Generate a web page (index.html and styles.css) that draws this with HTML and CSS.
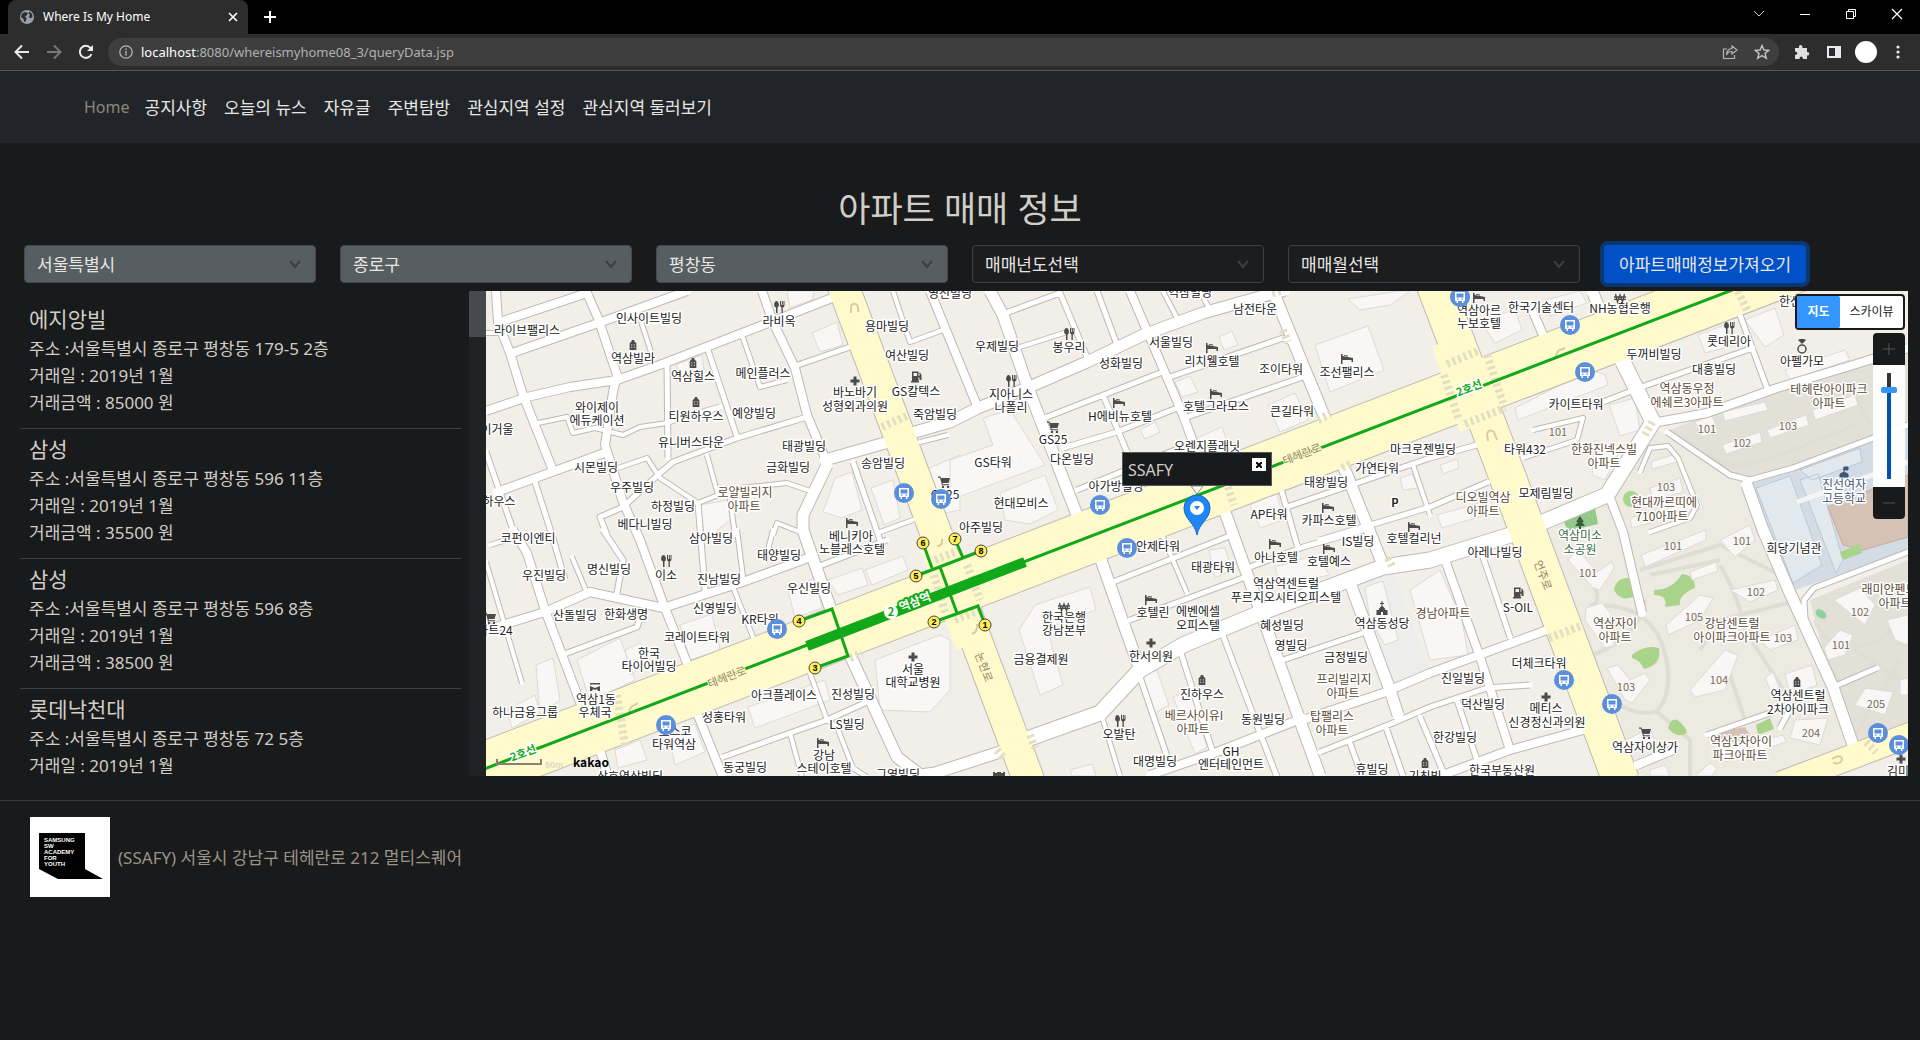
FILE: index.html
```html
<!DOCTYPE html>
<html lang="ko">
<head>
<meta charset="utf-8">
<meta name="viewport" content="width=device-width, initial-scale=1">
<title>Where Is My Home</title>
<link rel="stylesheet" href="styles.css">
</head>
<body>
<div class="browser">
  <div class="tabstrip">
    <div class="tab">
      <svg class="favicon" width="14" height="14" viewBox="0 0 14 14" aria-hidden="true"><circle cx="7" cy="7" r="7" fill="#9aa0a6"/><path d="M2 3.500L5 2L8 3L7 5L5 6.500L6.500 8L6 11L4 12L3.500 9L1 7Z M9.500 1.500L12 4L12.500 7L10 8.500L9 6.500L10 5L8.500 3Z" fill="#2d2e30"/></svg>
      <span class="tab-title">Where Is My Home</span>
      <button class="icon-btn" aria-label="Close tab"><svg width="10" height="10" viewBox="0 0 10 10"><path d="M1 1L9 9M9 1L1 9" stroke="#fff" stroke-width="1.600"/></svg></button>
    </div>
    <button class="icon-btn new-tab" aria-label="New tab"><svg width="14" height="14" viewBox="0 0 14 14"><path d="M7 1V13M1 7H13" stroke="#fff" stroke-width="2"/></svg></button>
    <div class="window-buttons">
      <button class="icon-btn" aria-label="Search tabs"><svg width="12" height="12" viewBox="0 0 12 12"><path d="M1 3L6 8L11 3" fill="none" stroke="#ccc"/></svg></button>
      <button class="icon-btn" aria-label="Minimize"><svg width="12" height="12" viewBox="0 0 12 12"><path d="M1 6.500H11" stroke="#fff"/></svg></button>
      <button class="icon-btn" aria-label="Restore"><svg width="12" height="12" viewBox="0 0 12 12"><path d="M1.500 3.500H8.500V10.500H1.500ZM3.500 3V1.500H10.500V8.500H9" fill="none" stroke="#fff"/></svg></button>
      <button class="icon-btn" aria-label="Close"><svg width="12" height="12" viewBox="0 0 12 12"><path d="M1 1L11 11M11 1L1 11" stroke="#fff" stroke-width="1.200"/></svg></button>
    </div>
  </div>
  <div class="toolbar">
    <button class="icon-btn" aria-label="Back"><svg width="16" height="16" viewBox="0 0 16 16"><path d="M15 8H2M8 1.500L1.500 8L8 14.500" fill="none" stroke="#e8eaed" stroke-width="2"/></svg></button>
    <button class="icon-btn" aria-label="Forward"><svg width="16" height="16" viewBox="0 0 16 16"><path d="M1 8H14M8 1.500L14.500 8L8 14.500" fill="none" stroke="#777" stroke-width="2"/></svg></button>
    <button class="icon-btn" aria-label="Reload"><svg width="16" height="16" viewBox="0 0 16 16"><path d="M13.500 10A6 6 0 1 1 12.500 4L14 5.500" fill="none" stroke="#e8eaed" stroke-width="2"/><path d="M15 1V7H9Z" fill="#e8eaed"/></svg></button>
    <div class="address">
      <svg width="14" height="14" viewBox="0 0 14 14" aria-hidden="true"><circle cx="7" cy="7" r="6.200" fill="none" stroke="#b5b5b5" stroke-width="1.300"/><path d="M7 6V10.500M7 3.500V5" stroke="#b5b5b5" stroke-width="1.400"/></svg>
      <span class="url" role="textbox" aria-label="Address"><b>localhost</b>:8080/whereismyhome08_3/queryData.jsp</span>
      <button class="icon-btn" aria-label="Share"><svg width="16" height="16" viewBox="0 0 16 16"><path d="M5 5H1.500V14.500H12.500V11M10 2L15 6L10 10V7.500C7 7.500 5 9 4.500 11C4.500 7 7 4.500 10 4.500Z" fill="none" stroke="#b5b5b5" stroke-width="1.200"/></svg></button>
      <button class="icon-btn" aria-label="Bookmark"><svg width="16" height="16" viewBox="0 0 16 16"><path d="M8 1.500L9.900 6L14.800 6.300L11 9.500L12.300 14.300L8 11.600L3.700 14.300L5 9.500L1.200 6.300L6.100 6Z" fill="none" stroke="#c5c5c5" stroke-width="1.400"/></svg></button>
    </div>
    <button class="icon-btn" aria-label="Extensions"><svg width="16" height="16" viewBox="0 0 16 16"><path d="M1 4H5C4 0 9 0 8.500 4H13V8C16 7.500 16 12 13 11.500V15H9C9 11.500 5.500 11.500 5.500 15H1V11C4 11 4 7.500 1 7.500Z" fill="#e0e0e0"/></svg></button>
    <button class="icon-btn" aria-label="Side panel"><svg width="16" height="16" viewBox="0 0 16 16"><path d="M1 2H15V14H1ZM3 4V12H9V4Z" fill="#e8eaed" fill-rule="evenodd"/></svg></button>
    <button class="icon-btn avatar" aria-label="Profile"></button>
    <button class="icon-btn" aria-label="Menu"><svg width="16" height="16" viewBox="0 0 16 16"><circle cx="8" cy="3" r="1.600" fill="#e8eaed"/><circle cx="8" cy="8" r="1.600" fill="#e8eaed"/><circle cx="8" cy="13" r="1.600" fill="#e8eaed"/></svg></button>
  </div>
</div>

<nav class="site-nav">
  <a class="current" href="#">Home</a>
  <a href="#">공지사항</a>
  <a href="#">오늘의 뉴스</a>
  <a href="#">자유글</a>
  <a href="#">주변탐방</a>
  <a href="#">관심지역 설정</a>
  <a href="#">관심지역 둘러보기</a>
</nav>

<main>
  <h1>아파트 매매 정보</h1>
  <form class="filters">
    <label class="field chosen"><select aria-label="시도"><option>서울특별시</option></select><svg width="16" height="16" viewBox="0 0 16 16"><path d="M3 5L8 11L13 5"/></svg></label>
    <label class="field chosen"><select aria-label="구군"><option>종로구</option></select><svg width="16" height="16" viewBox="0 0 16 16"><path d="M3 5L8 11L13 5"/></svg></label>
    <label class="field chosen"><select aria-label="동"><option>평창동</option></select><svg width="16" height="16" viewBox="0 0 16 16"><path d="M3 5L8 11L13 5"/></svg></label>
    <label class="field"><select aria-label="매매년도"><option>매매년도선택</option></select><svg width="16" height="16" viewBox="0 0 16 16"><path d="M3 5L8 11L13 5"/></svg></label>
    <label class="field"><select aria-label="매매월"><option>매매월선택</option></select><svg width="16" height="16" viewBox="0 0 16 16"><path d="M3 5L8 11L13 5"/></svg></label>
    <button class="submit" type="button">아파트매매정보가져오기</button>
  </form>

  <section class="results">
    <div class="list-pane">
      <div class="deals">
        <article class="deal"><h2>에지앙빌</h2><p>주소 :서울특별시 종로구 평창동 179-5 2층</p><p>거래일 : 2019년 1월</p><p>거래금액 : 85000 원</p></article>
        <article class="deal"><h2>삼성</h2><p>주소 :서울특별시 종로구 평창동 596 11층</p><p>거래일 : 2019년 1월</p><p>거래금액 : 35500 원</p></article>
        <article class="deal"><h2>삼성</h2><p>주소 :서울특별시 종로구 평창동 596 8층</p><p>거래일 : 2019년 1월</p><p>거래금액 : 38500 원</p></article>
        <article class="deal"><h2>롯데낙천대</h2><p>주소 :서울특별시 종로구 평창동 72 5층</p><p>거래일 : 2019년 1월</p></article>
      </div>
      <div class="scrollbar"><div class="thumb"></div></div>
    </div>

    <div class="map">
      <svg class="map-canvas" viewBox="486 291 1422 485" preserveAspectRatio="xMinYMin slice" role="img" aria-label="지도">
        <defs>
          <path id="rd4" d="M486 333L500 333M638 312L652 355M538 423L567 417L573 433L595 428L623 435L640 427L667 423M742 335L760 387L787 380M813 492L787 483L740 488M618 468L647 458L660 478L698 503L718 495L707 455M730 498L735 535M773 535L777 523L800 532M880 532L913 520M893 291L910 342L943 330M920 442L948 435M490 545L522 535M486 562L522 683M572 557L587 593M737 530L743 577M733 587L753 637M773 530L765 562M810 673L827 720L837 727L853 768L867 777M790 733L802 777M1020 347L1067 332M1163 291L1177 318M1200 291L1210 310M1163 537L1187 593M1413 465L1430 515M1523 458L1577 440L1583 418L1533 430M1640 472L1650 448L1668 446L1678 458L1697 505L1690 518L1650 532M1103 720L1120 776"/>
          <path id="rd6" d="M668 422L720 407M667 363L668 458M707 347L737 437M795 366L850 347M807 417L737 438L673 462L660 473L623 507L600 517L607 535M486 452L513 530M535 482L552 535L565 580M698 503L705 590M853 462L880 540M603 530L623 560L617 593M567 653L637 627L643 610M817 567L887 540M723 757L790 733L827 720L867 702M1003 314L1060 293L1087 357M1097 291L1117 345M1170 377L1283 338L1296 345M1187 417L1303 377M1047 417L1160 373M1063 448L1117 432L1177 408M1103 395L1127 452M1077 490L1180 448M1280 485L1297 545M1287 507L1430 458L1477 445M1320 540L1377 523L1430 507L1488 482M1113 582L1227 537M1130 620L1243 578M1250 567L1303 547L1363 530M1140 677L1170 765M1180 650L1213 753M1222 633L1260 733L1277 777M1283 660L1363 633M1320 752L1393 723L1430 707L1487 688L1530 685M1350 743L1362 776M1387 730L1403 776M1420 717L1445 776M1603 402L1647 385L1753 348M1740 315L1767 388M1667 432L1730 475L1750 480L1793 468L1908 425M1830 683L1805 620L1804 600L1814 588L1908 552M1833 687L1877 668M1707 735L1773 712M1780 728L1792 706M1483 557L1510 637M1457 700L1477 760"/>
          <path id="rd9" d="M496 291L498 322L510 353L523 395L552 468M500 322L587 293L598 318L617 375L613 392L605 445L623 502L640 540L663 603L687 663M512 353L607 320L687 291M486 411L527 397L570 387L617 380L665 363L763 325L832 298M762 291L773 322L795 368L807 415L825 458M497 492L607 452M930 291L978 408M513 530L527 553L545 610L583 710M486 630L545 612L590 592L663 608L740 583L808 558M697 713L723 777M600 750L608 777M1130 291L1148 333L1163 368L1183 415L1193 442M1303 720L1383 693L1430 673L1547 630M1303 718L1217 752L1150 775M1440 776L1510 750L1583 730M1445 560L1480 657L1510 750M1610 498L1623 532L1642 613M1530 305L1543 335M1637 765L1673 750M1653 423L1707 413L1777 388L1853 365L1908 348"/>
          <path id="rd12" d="M825 460L885 443M915 432L950 422L978 408L1027 388L1087 362L1143 335L1203 313L1285 290M827 465L803 515L803 530L830 607M850 655L897 757L923 777M905 777L935 773L1000 752M990 291L1003 315L1027 385L1077 515M1273 291L1303 365L1325 418M1225 512L1260 610L1320 776M1343 465L1383 565M1350 583L1390 690L1398 715M1100 557L1140 670M1747 485L1763 530L1790 593L1833 687L1853 745M1593 293L1602 315"/>
          <path id="rd15" d="M1030 738L1100 713L1140 670L1183 645L1260 613L1383 567L1430 560L1520 532M1623 362L1653 422L1607 495L1543 522"/>
          <path id="avenue" d="M440 786L1800 264"/>
          <path id="street-w" d="M842 283L1029 781"/>
          <path id="street-e" d="M1434 283L1490 430L1621 781"/>
          <path id="street-s" d="M1780 784L1920 731"/>
          <symbol id="bus" viewBox="0 0 20 20"><circle cx="10" cy="10" r="10" fill="#5b8fdc"/><path d="M5 5H15V14H13.500V16H12V14H8V16H6.500V14H5ZM6.500 6.500V10.500H13.500V6.500ZM7 11.500V12.700H8.500V11.500ZM11.500 11.500V12.700H13V11.500Z" fill="#fff" fill-rule="evenodd"/></symbol>
          <symbol id="bldg" viewBox="0 0 12 12"><path d="M2 12V4L4.500 1.500V0H7.500V1.500L10 4V12ZM4 5V6.500H5V5ZM7 5V6.500H8V5ZM4 8V9.500H5V8ZM7 8V9.500H8V8Z" fill="#4b4b4b" fill-rule="evenodd"/></symbol>
          <symbol id="food" viewBox="0 0 12 12"><path d="M3.500 0C1 0 0 6 3 6.500V12H4.500V6.500C7 6 6 0 3.500 0ZM7 0V4Q7 6 8.500 6.500V12H9.800V6.500Q11.500 6 11.500 4V0H10.500V4H9.800V0H8.800V4H8V0Z" fill="#4b4b4b"/></symbol>
          <symbol id="bed" viewBox="0 0 12 12"><path d="M0 1H1.500V3L12 5V9H10.500V7H1.500V11H0ZM3 2L7 2.500V3.500L3 2.800Z" fill="#4b4b4b"/></symbol>
          <symbol id="cross" viewBox="0 0 12 12"><path d="M4.500 1.500H7.500V4.500H10.500V7.500H7.500V10.500H4.500V7.500H1.500V4.500H4.500Z" fill="#4b4b4b"/></symbol>
          <symbol id="gas" viewBox="0 0 12 12"><path d="M2 0.500H8.500V5L10 4L9 2L10 1.500L11.500 4V9H9.500V6.500H8.500V10H9V11.500H1V10H2ZM3.500 2V5H7V2Z" fill="#4b4b4b" fill-rule="evenodd"/></symbol>
          <symbol id="cart" viewBox="0 0 12 12"><path d="M0 0.500H2.500L3 2H12L10.500 7H4.500L4.800 8.300H11V9.300H4L2 1.700H0Z" fill="#4b4b4b"/><circle cx="5" cy="11" r="1.200" fill="#4b4b4b"/><circle cx="10" cy="11" r="1.200" fill="#4b4b4b"/></symbol>
          <symbol id="church" viewBox="0 0 12 14"><path d="M5.500 0H6.500V2H8V3H6.500V5L9 7.500V9H11.500V14H7V11H5V14H0.500V9H3V7.500L5.500 5V3H4V2H5.500Z" fill="#4b4b4b"/></symbol>
          <symbol id="post" viewBox="0 0 12 12"><path d="M1 2H11V3.500H1ZM1 5L6 7L11 5V10H9L8 8L6 9L4 8L3 10H1Z" fill="#4b4b4b"/></symbol>
          <symbol id="won" viewBox="0 0 12 12"><path d="M1.500 2L3.500 10L6 3L8.500 10L10.500 2M0 5H12M0 7.300H12" fill="none" stroke="#4b4b4b" stroke-width="1.300"/></symbol>
        </defs>

        <rect x="486" y="291" width="1422" height="485" fill="#f2efe9"/>
        <!-- apartment complexes, school grounds and parks -->
        <path d="M1543 525L1607 500L1655 430L1747 485L1853 745L1770 776H1635Z" fill="#edeae2"/>
        <path d="M1670 430L1707 415L1777 392L1908 350V422L1793 465L1750 477L1730 472Z" fill="#e3e0d8"/>
        <path d="M1810 600L1908 560V722L1853 742L1833 690Z" fill="#e3e0d8"/>
        <path d="M1353 580L1393 572L1430 670L1390 685Z" fill="#ededeb"/>
        <path d="M1747 485L1908 428V550L1790 592Z" fill="#d3dce5"/>
        <path d="M1756 488L1790 476L1822 565L1793 583ZM1800 480L1818 474L1843 560L1836 573ZM1800 470L1860 448L1862 462L1812 480Z" fill="#e2e9ee" stroke="#bcc9d4"/>
        <path d="M1797 502L1908 462" stroke="#f5f5f3" stroke-width="5"/>
        <path d="M1828 507L1908 475V537L1863 550L1843 545Z" fill="#d6c2b4" stroke="#c5ab9b"/>
        <path d="M1840 552L1860 544L1862 553L1843 560Z" fill="#a9d58b"/>
        <g class="path"><path d="M1575 560Q1610 600 1590 606Q1660 600 1668 670Q1670 700 1655 712Q1620 720 1590 670M1640 570L1720 545L1790 580M1720 565Q1740 600 1745 630L1790 700M1650 575L1720 560M1655 710L1690 740L1690 776M1700 650L1720 620L1800 600M1580 660Q1640 640 1645 600M1725 660L1745 720M1708 455Q1730 475 1780 455L1855 425M1855 395L1870 425M1815 620Q1830 660 1880 640L1900 620M1840 640L1900 680M1855 735L1900 660"/></g>
        <path d="M1563 520L1595 508L1598 524L1568 531Z" fill="#93ca8b"/><circle cx="1631" cy="499" r="8" fill="#a9d58b"/><path d="M1664 510L1685 502L1690 512L1665 517Z" fill="#a9d58b"/>
        <path d="M1614 590Q1616 577 1630 578L1633 597Q1620 602 1614 590ZM1654 590Q1672 590 1682 574Q1695 575 1695 588Q1678 595 1680 605L1665 607Q1668 595 1654 595ZM1632 655Q1645 644 1659 648Q1662 665 1644 669Q1640 660 1632 658ZM1668 728Q1672 715 1680 722Q1690 732 1685 734Q1675 738 1668 728ZM1756 725L1770 718L1774 729L1758 735Z" fill="#aad48c"/>
        <ellipse cx="1821" cy="614" rx="6" ry="4" transform="rotate(35 1821 614)" fill="#8fd0a0"/>
        <path d="M1712 733L1745 727L1752 738L1716 745Z" fill="#d6c2b4"/>
        <!-- building footprints -->
        <g class="building"><path d="M812 333L837 322L843 345L820 352ZM677 364L702 355L704 372L688 384L677 382ZM787 291H814L812 300L790 308ZM835 478L852 472L862 510L842 518L823 512ZM871 488L893 480L900 518L884 525ZM913 475L960 455V510L935 515ZM700 505L728 500L730 520L705 540Z"/><path d="M577 660L620 638L635 680L590 702ZM680 625L712 614L720 650L690 660ZM828 580L862 568L868 585L838 595ZM865 570L903 556L908 570L872 585ZM788 590L815 578L822 608L795 618ZM875 660L940 635L950 640V690L930 712L880 710ZM748 707L825 680L830 700L755 728ZM615 750L640 740L647 760L618 768ZM668 735L695 724L705 752L675 765ZM536 665L553 658L560 700L540 715ZM507 710L535 695L540 713L512 728ZM625 650L640 643L650 660L630 675Z"/><path d="M983 418L1010 410L1045 465L950 500V460L993 445ZM1000 493L1045 475L1058 510L1030 524L1005 520ZM1219 337L1232 331L1238 345L1224 350ZM1175 382L1190 376L1198 392L1182 397ZM1140 430L1155 422L1160 432L1145 439ZM1315 345L1368 326L1384 370L1330 392ZM1348 299L1400 291H1410L1390 305L1360 310ZM1197 438L1222 427L1230 450L1205 460ZM1268 405L1295 393L1308 420L1280 432ZM1250 505L1277 493L1283 520L1260 528ZM1400 478L1412 474L1418 488L1403 490Z"/><path d="M1019 630L1035 605L1090 587L1096 610L1047 628L1063 685L1040 695ZM1142 675L1157 670L1169 705L1155 713ZM1173 697L1190 690L1207 747L1195 754ZM1209 550L1225 548L1232 570L1215 578ZM1275 567L1315 555L1330 575L1280 585ZM1365 587L1383 581L1398 640L1385 645L1370 620ZM1410 590L1440 570L1462 620L1468 655L1430 660ZM1070 770L1092 764L1096 776H1072Z"/><path d="M1480 320L1515 310L1522 330L1495 343ZM1545 300L1580 291L1587 303L1550 316ZM1515 408L1590 370L1605 375L1608 385L1518 420ZM1609 405L1635 398L1640 430L1620 436ZM1595 440L1620 450L1605 480L1592 475ZM1698 335L1725 325L1735 345L1705 353ZM1745 320L1775 308L1784 335L1765 347ZM1785 370L1845 350L1850 360L1790 380ZM1440 465L1457 459L1459 468L1443 474ZM1437 515L1490 500L1495 512L1442 528Z"/><path d="M1722 412L1765 402L1768 410L1725 421ZM1695 422L1712 415L1718 432L1702 437ZM1722 445L1760 432L1762 442L1726 454ZM1767 430L1806 415L1809 425L1770 438ZM1812 410L1855 395L1858 405L1815 420ZM1650 488L1680 478L1683 492L1653 500ZM1651 462L1678 453L1680 461L1652 469ZM1630 518L1700 500L1703 508L1632 528Z"/><path d="M1641 555L1706 530L1706 540L1645 567ZM1690 572L1716 562L1718 571L1692 580ZM1720 540L1750 525L1755 540L1735 557ZM1568 560L1578 550L1597 572L1612 562L1614 568L1600 590L1593 588ZM1586 608L1602 603L1612 615L1602 625L1615 645L1605 648L1585 620ZM1730 590L1775 580L1778 590L1750 602ZM1666 625L1700 595L1713 598L1700 620L1668 635ZM1690 690L1725 650L1738 655L1725 690L1695 697ZM1607 668L1618 665L1630 680L1645 673L1650 680L1632 703L1625 700ZM1760 640L1795 625L1798 640L1770 650ZM1834 600L1860 588L1875 605L1865 625ZM1824 648L1840 630L1853 635L1845 655L1828 660ZM1887 620L1908 615V645L1895 640ZM1855 705L1865 688L1893 692L1885 715ZM1790 738L1795 720L1828 718L1820 745ZM1785 674L1812 665L1817 685L1790 695ZM1765 678L1773 672L1782 695L1775 700ZM1720 750L1783 735L1786 742L1725 762ZM1900 680L1908 678V695H1900ZM1626 740L1650 728L1655 742L1630 752ZM1650 770L1665 765L1670 776H1650ZM1695 776L1710 763L1717 768L1712 776Z"/></g>
        <!-- road casings, then surfaces -->
        <g class="casing"><use href="#rd4" stroke-width="6"/><use href="#rd6" stroke-width="7"/><use href="#rd9" stroke-width="10"/><use href="#rd12" stroke-width="13"/><use href="#rd15" stroke-width="17"/><use href="#avenue" stroke-width="55"/><use href="#street-w" stroke-width="33"/><use href="#street-e" stroke-width="38"/><use href="#street-s" stroke-width="26"/></g>
        <g class="surface"><use href="#rd4" stroke-width="4"/><use href="#rd6" stroke-width="5"/><use href="#rd9" stroke-width="8"/><use href="#rd12" stroke-width="11"/><use href="#rd15" stroke-width="15"/></g>
        <g class="yellow"><use href="#avenue" stroke-width="53"/><use href="#street-w" stroke-width="31"/><use href="#street-e" stroke-width="36"/><use href="#street-s" stroke-width="24"/><path d="M935 536L973 644" stroke-width="36"/><path d="M1452 340L1480 425" stroke-width="42"/></g>
        <g class="crosswalk"><path d="M882 427L909 415M935 560L960 550M934 575L946 615M955 620L980 610M967 565L980 600M1447 364L1480 350M1444 375L1459 420M1487 355L1503 403M1465 424L1505 408M1549 638L1583 625M617 695L625 745M1228 487L1234 505M1738 291L1748 312M1866 742L1876 752M1030 735L1035 748M1272 293L1284 290M1283 330L1288 342M1318 420L1330 414M1342 468L1352 463M850 658L862 653M1645 435L1653 421M1388 558L1393 568M997 750L1003 757"/></g>
        <g class="marking"><path d="M851 313V308Q851 303 855 304Q859 305 858 312M937 546Q943 546 942 539M1488 441L1487 434Q1489 428 1494 432L1497 440M972 634Q978 632 977 624M628 715L631 707L638 703M1555 358L1558 351L1565 348M1833 763Q1842 765 1842 758Q1839 754 1832 759"/></g>
        <!-- subway line 2 and station exits -->
        <g class="subway"><path d="M440 786L1800 264" stroke-width="3"/><path d="M807 646L1025 562" stroke-width="10"/><path d="M799 621L832 609L848 656L815 668M923 543L932 568M916 576L981 551M955 539L963 558M940 567L957 613M934 622L978 606L985 625" stroke-width="3"/></g>
        <g class="exit"><circle cx="799" cy="621" r="6"/><circle cx="815" cy="668" r="6"/><circle cx="923" cy="543" r="6"/><circle cx="955" cy="539" r="6"/><circle cx="916" cy="576" r="6"/><circle cx="934" cy="622" r="6"/><circle cx="981" cy="551" r="6"/><circle cx="985" cy="625" r="6"/><text x="799" y="624">4</text><text x="815" y="671">3</text><text x="923" y="546">6</text><text x="955" y="542">7</text><text x="916" y="579">5</text><text x="934" y="625">2</text><text x="981" y="554">8</text><text x="985" y="628">1</text></g>
        <circle cx="891" cy="612" r="7" fill="#fff"/><text class="line-no" x="891" y="616">2</text>
        <g class="line-name"><text x="523" y="757" transform="rotate(-21 523 753)">2호선</text><text x="1469" y="392" transform="rotate(-21 1469 388)">2호선</text></g>
        <text class="station" x="915" y="606" transform="rotate(-21 915 602)">역삼역</text>
        <g class="road-name"><text x="727" y="681" transform="rotate(-21 727 677)">테헤란로</text><text x="1302" y="458" transform="rotate(-21 1302 454)">테헤란로</text><text x="984" y="671" transform="rotate(69 984 667)">논현로</text><text x="1543" y="579" transform="rotate(69 1543 575)">언주로</text></g>

        <g class="unit"><text x="1558" y="436">101</text><text x="1707" y="433">101</text><text x="1742" y="447">102</text><text x="1788" y="430">103</text><text x="1666" y="491">103</text><text x="1673" y="550">101</text><text x="1742" y="545">101</text><text x="1588" y="577">101</text><text x="1756" y="596">102</text><text x="1860" y="616">102</text><text x="1694" y="621">105</text><text x="1783" y="642">103</text><text x="1841" y="649">101</text><text x="1626" y="691">103</text><text x="1719" y="684">104</text><text x="1876" y="708">205</text><text x="1811" y="737">204</text></g>
        <g class="label">
          <text x="527" y="335">라이브팰리스</text><text x="649" y="323">인사이트빌딩</text><text x="779" y="326">라비옥</text><text x="887" y="331">용마빌딩</text><text x="950" y="298">영신빌딩</text><text x="633" y="363">역삼빌라</text><text x="907" y="360">여산빌딩</text><text x="693" y="381">역삼힐스</text><text x="763" y="378">메인플러스</text><text x="855" y="397">바노바기</text><text x="855" y="411">성형외과의원</text><text x="916" y="396">GS칼텍스</text><text x="597" y="412">와이제이</text><text x="597" y="425">에듀케이션</text><text x="696" y="421">티원하우스</text><text x="754" y="418">예양빌딩</text><text x="935" y="419">죽암빌딩</text><text x="497" y="434">이거울</text><text x="691" y="447">유니버스타운</text><text x="804" y="451">태광빌딩</text><text x="596" y="472">시몬빌딩</text><text x="788" y="472">금화빌딩</text><text x="883" y="468">송암빌딩</text><text x="632" y="492">우주빌딩</text><text x="499" y="506">하우스</text><text x="673" y="511">하정빌딩</text><text x="645" y="529">베다니빌딩</text><text x="945" y="499">GS25</text>
          <text x="528" y="543">코펀이엔티</text><text x="711" y="543">삼아빌딩</text><text x="851" y="541">베니키아</text><text x="852" y="554">노블레스호텔</text><text x="779" y="560">태양빌딩</text><text x="544" y="580">우진빌딩</text><text x="609" y="574">명신빌딩</text><text x="666" y="580">이소</text><text x="719" y="584">진남빌딩</text><text x="809" y="593">우신빌딩</text><text x="715" y="613">신영빌딩</text><text x="575" y="620">산돌빌딩</text><text x="626" y="619">한화생명</text><text x="495" y="635">마트24</text><text x="760" y="624">KR타워</text><text x="697" y="642">코레이트타워</text><text x="649" y="658">한국</text><text x="649" y="671">타이어빌딩</text><text x="596" y="704">역삼1동</text><text x="595" y="717">우체국</text><text x="525" y="717">하나금융그룹</text><text x="784" y="700">아크플레이스</text><text x="853" y="699">진성빌딩</text><text x="913" y="674">서울</text><text x="913" y="687">대학교병원</text><text x="724" y="722">성홍타워</text><text x="847" y="729">LS빌딩</text><text x="675" y="736">포스코</text><text x="674" y="749">타워역삼</text><text x="824" y="760">강남</text><text x="824" y="773">스테이호텔</text><text x="745" y="772">동궁빌딩</text><text x="898" y="779">그영빌딩</text><text x="630" y="781">상호역삼빌딩</text>
          <text x="997" y="351">우제빌딩</text><text x="1069" y="352">봉우리</text><text x="1121" y="368">성화빌딩</text><text x="1171" y="347">서울빌딩</text><text x="1255" y="314">남전타운</text><text x="1190" y="297">역삼빌딩</text><text x="1212" y="366">리치웰호텔</text><text x="1281" y="374">조이타워</text><text x="1347" y="377">조선팰리스</text><text x="1011" y="399">지아니스</text><text x="1011" y="412">나폴리</text><text x="1120" y="421">H에비뉴호텔</text><text x="1216" y="411">호텔그라모스</text><text x="1292" y="416">큰길타워</text><text x="1053" y="444">GS25</text><text x="993" y="467">GS타워</text><text x="1072" y="464">다온빌딩</text><text x="1207" y="451">오렌지플래닛</text><text x="1423" y="454">마크로젠빌딩</text><text x="1377" y="473">가연타워</text><text x="1326" y="487">태왕빌딩</text><text x="1116" y="491">아가방빌딩</text><text x="1021" y="508">현대모비스</text><text x="1269" y="519">AP타워</text><text x="1329" y="525">카파스호텔</text><text x="1395" y="507" class="parking">P</text><text x="981" y="532">아주빌딩</text>
          <text x="1158" y="551">안제타워</text><text x="1358" y="546">IS빌딩</text><text x="1414" y="543">호텔컬리넌</text><text x="1276" y="562">아나호텔</text><text x="1329" y="566">호텔예스</text><text x="1213" y="572">태광타워</text><text x="1286" y="588">역삼역센트럴</text><text x="1286" y="602">푸르지오시티오피스텔</text><text x="1153" y="617">호텔린</text><text x="1198" y="616">에벤에셀</text><text x="1198" y="630">오피스텔</text><text x="1064" y="622">한국은행</text><text x="1064" y="635">강남본부</text><text x="1282" y="630">혜성빌딩</text><text x="1291" y="650">영빌딩</text><text x="1382" y="628">역삼동성당</text><text x="1041" y="664">금융결제원</text><text x="1151" y="661">한서의원</text><text x="1346" y="662">금정빌딩</text><text x="1202" y="699">진하우스</text><text x="1263" y="724">동원빌딩</text><text x="1119" y="739">오발탄</text><text x="1155" y="766">대명빌딩</text><text x="1231" y="756">GH</text><text x="1231" y="769">엔터테인먼트</text><text x="1372" y="774">휴빌딩</text><text x="1425" y="781">기최빌</text>
          <text x="1479" y="315">역삼아르</text><text x="1479" y="328">누보호텔</text><text x="1541" y="312">한국기술센터</text><text x="1620" y="313">NH농협은행</text><text x="1729" y="346">롯데리아</text><text x="1654" y="359">두꺼비빌딩</text><text x="1802" y="366">아펠가모</text><text x="1714" y="374">대흥빌딩</text><text x="1790" y="306">한신</text><text x="1576" y="409">카이트타워</text><text x="1525" y="454">타워432</text><text x="1546" y="498">모제림빌딩</text><text x="1794" y="553">희당기념관</text><text x="1495" y="557">아레나빌딩</text><text x="1518" y="612">S-OIL</text><text x="1539" y="668">더체크타워</text><text x="1463" y="683">진일빌딩</text><text x="1546" y="713">메티스</text><text x="1547" y="727">신경정신과의원</text><text x="1483" y="709">덕산빌딩</text><text x="1798" y="700">역삼센트럴</text><text x="1798" y="714">2차아이파크</text><text x="1455" y="742">한강빌딩</text><text x="1645" y="752">역삼자이상가</text><text x="1502" y="775">한국부동산원</text><text x="1898" y="776">김미</text>
        </g>
        <g class="label apt"><text x="745" y="497">로얄빌리지</text><text x="744" y="511">아파트</text><text x="1344" y="684">프리빌리지</text><text x="1343" y="698">아파트</text><text x="1194" y="720">베르사이유I</text><text x="1193" y="734">아파트</text><text x="1332" y="721">탑팰리스</text><text x="1332" y="735">아파트</text><text x="1687" y="393">역삼동우정</text><text x="1687" y="407">에쉐르3아파트</text><text x="1829" y="394">테헤란아이파크</text><text x="1829" y="408">아파트</text><text x="1604" y="454">한화진넥스빌</text><text x="1604" y="468">아파트</text><text x="1483" y="502">디오빌역삼</text><text x="1483" y="516">아파트</text><text x="1664" y="507">현대까르띠에</text><text x="1662" y="521">710아파트</text><text x="1443" y="618">경남아파트</text><text x="1615" y="628">역삼자이</text><text x="1615" y="642">아파트</text><text x="1732" y="628">강남센트럴</text><text x="1732" y="642">아이파크아파트</text><text x="1741" y="746">역삼1차아이</text><text x="1740" y="760">파크아파트</text><text x="1889" y="594">래미안펜트</text><text x="1895" y="608">아파트</text></g>
        <g class="label school"><text x="1844" y="489">진선여자</text><text x="1844" y="503">고등학교</text></g>
        <g class="label park"><text x="1580" y="540">역삼미소</text><text x="1580" y="554">소공원</text></g>

        <g>
          <use href="#bldg" x="628" y="340" width="10" height="10"/><use href="#bldg" x="688" y="358" width="10" height="10"/><use href="#bldg" x="691" y="397" width="10" height="10"/><use href="#bldg" x="1197" y="675" width="10" height="10"/><use href="#bldg" x="1792" y="677" width="10" height="10"/><use href="#bldg" x="1420" y="758" width="10" height="10"/>
          <use href="#food" x="773" y="301" width="12" height="12"/><use href="#food" x="660" y="555" width="12" height="12"/><use href="#food" x="1063" y="328" width="12" height="12"/><use href="#food" x="1005" y="375" width="12" height="12"/><use href="#food" x="1114" y="715" width="12" height="12"/><use href="#food" x="1723" y="322" width="12" height="12"/>
          <use href="#bed" x="846" y="517" width="12" height="12"/><use href="#bed" x="817" y="737" width="12" height="12"/><use href="#bed" x="1206" y="342" width="12" height="12"/><use href="#bed" x="1341" y="353" width="12" height="12"/><use href="#bed" x="1113" y="397" width="12" height="12"/><use href="#bed" x="1210" y="388" width="12" height="12"/><use href="#bed" x="1322" y="502" width="12" height="12"/><use href="#bed" x="1408" y="521" width="12" height="12"/><use href="#bed" x="1269" y="538" width="12" height="12"/><use href="#bed" x="1323" y="543" width="12" height="12"/><use href="#bed" x="1145" y="594" width="12" height="12"/><use href="#bed" x="1473" y="292" width="12" height="12"/>
          <use href="#cross" x="849" y="375" width="12" height="12"/><use href="#cross" x="907" y="651" width="12" height="12"/><use href="#cross" x="1145" y="637" width="12" height="12"/><use href="#cross" x="1540" y="691" width="12" height="12"/><use href="#cross" x="1895" y="753" width="12" height="12"/>
          <use href="#gas" x="910" y="371" width="12" height="12"/><use href="#gas" x="1512" y="587" width="12" height="12"/>
          <use href="#cart" x="938" y="476" width="12" height="12"/><use href="#cart" x="484" y="612" width="12" height="12"/><use href="#cart" x="1047" y="421" width="12" height="12"/><use href="#cart" x="1639" y="727" width="12" height="12"/>
          <use href="#post" x="589" y="681" width="12" height="12"/><use href="#won" x="1058" y="601" width="12" height="12"/><use href="#won" x="1614" y="292" width="12" height="12"/>
          <use href="#church" x="1376" y="601" width="12" height="14"/>
          <path d="M993 776V772H995V773H997V772H1001V773H1003V772H1005V776Z" fill="#4b4b4b"/>
          <circle cx="1802" cy="349" r="4" fill="none" stroke="#4b4b4b" stroke-width="1.500"/><path d="M1802 344L1798 340L1800 339H1804L1806 340Z" fill="#4b4b4b"/>
          <path d="M1844 467V472L1840 474V477H1848V474L1844 472M1844 467H1848V470H1844Z" fill="#3f5875" stroke="#3f5875"/>
          <path d="M1580 516L1584 522H1582L1585 526H1581V529H1579V526H1575L1578 522H1576Z" fill="#3d5e3c"/>
        </g>
        <g><use href="#bus" x="894" y="483" width="20" height="20"/><use href="#bus" x="931" y="489" width="20" height="20"/><use href="#bus" x="767" y="619" width="20" height="20"/><use href="#bus" x="656" y="715" width="20" height="20"/><use href="#bus" x="1090" y="495" width="20" height="20"/><use href="#bus" x="1117" y="538" width="20" height="20"/><use href="#bus" x="1450" y="287" width="20" height="20"/><use href="#bus" x="1560" y="315" width="20" height="20"/><use href="#bus" x="1575" y="362" width="20" height="20"/><use href="#bus" x="1554" y="670" width="20" height="20"/><use href="#bus" x="1602" y="694" width="20" height="20"/><use href="#bus" x="1868" y="723" width="20" height="20"/><use href="#bus" x="1889" y="735" width="20" height="20"/></g>
        <!-- selected place pin -->
        <path d="M1191 486L1197 494L1203 486Z" fill="#fff" stroke="#888"/>
        <path d="M1197 535C1195 523 1184 519 1184 508A13 13 0 0 1 1210 508C1210 519 1199 523 1197 535Z" fill="#1f87f5" stroke="#1468c7"/>
        <circle cx="1197" cy="508" r="7" fill="#fff"/><path d="M1194 506H1200L1197 510Z" fill="#1f87f5"/>
        <path d="M497 759V764H541V759" fill="none" stroke="#8c7f70" stroke-width="2"/>
        <text class="scale" x="545" y="768">50m</text>
        <text class="brand" x="573" y="767">kakao</text>
      </svg>
      <div class="popup"><span>SSAFY</span><button aria-label="닫기"><svg width="6" height="6" viewBox="0 0 6 6"><path d="M0 0L6 6M6 0L0 6" stroke="#000" stroke-width="2"/></svg></button></div>
      <div class="map-tools">
        <div class="map-type"><button class="on">지도</button><button>스카이뷰</button></div>
        <div class="zoom">
          <button aria-label="확대"><svg width="12" height="12" viewBox="0 0 12 12"><path d="M6 0V12M0 6H12" stroke="#555"/></svg></button>
          <div class="zoom-track"><svg width="16" height="108" viewBox="0 0 16 108" aria-hidden="true"><path d="M8 1V18" stroke="#333639" stroke-width="4"/><path d="M8 18V107" stroke="#0051b0" stroke-width="4"/><rect x="0" y="15" width="16" height="6" rx="2" fill="#3396ff"/></svg></div>
          <button aria-label="축소"><svg width="12" height="12" viewBox="0 0 12 12"><path d="M0 6H12" stroke="#555"/></svg></button>
        </div>
      </div>
    </div>
  </section>
</main>

<footer>
  <svg class="logo" width="80" height="80" viewBox="0 0 80 80" role="img" aria-label="Samsung SW Academy For Youth">
    <rect width="80" height="80" fill="#fff"/><path d="M9 16H55V52L73 62H28L9 52Z" fill="#000"/>
    <g class="logo-text"><text x="14" y="25">SAMSUNG</text><text x="14" y="31">SW</text><text x="14" y="37">ACADEMY</text><text x="14" y="43">FOR</text><text x="14" y="49">YOUTH</text></g>
  </svg>
  <span>(SSAFY) 서울시 강남구 테헤란로 212 멀티스퀘어</span>
</footer>
</body>
</html>
```
FILE: styles.css
```css
* { box-sizing: border-box; }
body {
  margin: 0;
  min-height: 100vh;
  background: #181a1b;
  color: #d1cdc7;
  font: 17px/27px "Noto Sans", "Noto Sans CJK KR", sans-serif;
}
button, select { font: inherit; }
button { border: 0; padding: 0; cursor: pointer; }
h1, h2, p { margin: 0; font-weight: 400; }

/* browser chrome */
.browser { border-bottom: 1px solid #555; background: #2d2d2d; }
.tabstrip { display: flex; height: 34px; background: #000; align-items: stretch; padding-left: 8px; }
.tab {
  display: flex; align-items: center; gap: 9px;
  width: 240px; padding: 0 10px 0 12px;
  background: #2d2d2d; border-radius: 8px 8px 0 0;
}
.tab-title { flex: 1; color: #fff; font-size: 12px; line-height: 16px; }
.icon-btn { display: grid; place-items: center; background: none; flex: none; }
.new-tab { width: 44px; }
.window-buttons { display: flex; margin-left: auto; padding-bottom: 6px; }
.window-buttons .icon-btn { width: 46px; }
.toolbar { display: flex; align-items: center; gap: 16px; height: 36px; padding: 0 14px; }
.address {
  flex: 1; display: flex; align-items: center; gap: 8px;
  height: 28px; margin-left: -2px; margin-right: -1px; padding: 0 9px 0 11px;
  background: #3e3e3e; border-radius: 14px;
}
.address .icon-btn { margin-left: 8px; }
.url { flex: 1; font-size: 13px; line-height: 20px; color: #b0b0b0; }
.url b { font-weight: 400; color: #fff; }
.avatar { width: 22px; height: 22px; border-radius: 50%; background: #fff; margin: 0 -3px; }

/* site navigation */
.site-nav { display: flex; align-items: center; gap: 1px; height: 72px; padding: 0 76px; background: #212529; }
.site-nav a { padding: 8px; color: #e8e6e3; text-decoration: none; }
.site-nav .current { padding-right: 6px; color: #8f887c; font-size: 16px; }

/* search filters */
main { padding: 44px 12px 24px; border-bottom: 1px solid #363b3d; }
h1 { font-size: 35px; line-height: 44px; text-align: center; }
.filters { display: grid; grid-template-columns: repeat(6, 1fr); padding-top: 14px; }
.field { display: grid; margin: 0 12px; }
.field > * { grid-area: 1 / 1; }
.field select {
  appearance: none; height: 38px; padding: 0 12px; width: 100%;
  background: #1b1d1e; border: 1px solid #3c4144; border-radius: 4px; color: #e8e6e3;
}
.field svg { place-self: center end; margin-right: 13px; pointer-events: none; fill: none; stroke: #3c4144; stroke-width: 2; }
.chosen select { background: #575e62; border-color: #43494c; }
.chosen svg { stroke: #3a3f42; }
.submit {
  justify-self: start; height: 38px; margin-left: 12px; padding: 0 15px;
  background: #0050c8; color: #e8e6e3; border-radius: 4px; box-shadow: 0 0 0 4px #0c3670;
  white-space: nowrap;
}

/* results */
.results { display: grid; grid-template-columns: 1fr 3fr; height: 485px; margin-top: 8px; }
.list-pane { display: flex; min-width: 0; overflow: hidden; }
.deals { flex: 1; padding: 8px 8px 0; overflow: hidden; }
.deal { padding: 8px 9px 12px; border-bottom: 1px solid #3b4042; }
.deal h2 { font-size: 21px; line-height: 24px; margin-bottom: 4px; }
.scrollbar { width: 17px; background: #1f2324; }
.thumb { height: 46px; background: #454a4d; }

/* map */
.map { position: relative; overflow: hidden; min-width: 0; }
.map-canvas { display: block; width: 100%; height: 100%; }
.casing { fill: none; stroke: #bdbab5; stroke-linejoin: round; }
.surface { fill: none; stroke: #fff; stroke-linejoin: round; stroke-linecap: round; }
.yellow { fill: none; stroke: #fffacb; }
.building { fill: #f8f7f5; stroke: #dedbd6; }
.path { fill: none; stroke: #e0ddd4; stroke-width: 4; }
.crosswalk { fill: none; stroke: #e3dfc2; stroke-width: 8; stroke-dasharray: 3 3; }
.marking { fill: none; stroke: #d5cf9f; stroke-width: 2; }
.subway { fill: none; stroke: #11a919; }
.exit { fill: #ffee55; stroke: #444; text-anchor: middle; font: 700 9px "Liberation Sans", sans-serif; }
.exit text { fill: #000; stroke: none; }
.label { font: 12px "Noto Sans CJK KR", sans-serif; fill: #222; stroke: #fff; stroke-width: 3px; stroke-linejoin: round; paint-order: stroke; text-anchor: middle; }
.apt { fill: #5c4a35; }
.school { fill: #3f5875; }
.park { fill: #3f6a4c; }
.parking { font-weight: 700; font-size: 11px; }
.unit { font: 11px "Noto Sans CJK KR", sans-serif; fill: #7a6a5a; stroke: #f8f7f5; stroke-width: 2px; paint-order: stroke; text-anchor: middle; }
.line-name, .line-no, .station { font: 700 11px "Noto Sans CJK KR", sans-serif; text-anchor: middle; paint-order: stroke; stroke-linejoin: round; }
.line-name { fill: #11a919; stroke: #fff; stroke-width: 3px; }
.line-no { fill: #11a919; }
.station { font-size: 12px; fill: #fff; stroke: #11a919; stroke-width: 4px; }
.road-name { font: 11px "Noto Sans CJK KR", sans-serif; fill: #8d8660; stroke: #fffacb; stroke-width: 2px; paint-order: stroke; text-anchor: middle; }
.scale { font: 700 9px "Liberation Sans", sans-serif; fill: #ddd8c8; }
.brand { font: 700 12px "Noto Sans CJK KR", sans-serif; fill: #000; }

.popup {
  position: absolute; left: 636px; top: 161px;
  display: flex; justify-content: space-between; align-items: flex-start;
  width: 150px; height: 34px; padding: 5px 5px 0; background: #181a1b; border: 1px solid #55595c;
}
.popup span { font-size: 16px; line-height: 24px; }
.popup button { display: grid; place-items: center; width: 14px; height: 13px; background: #fff; }
.map-tools { position: absolute; top: 3px; right: 3px; display: flex; flex-direction: column; align-items: flex-end; gap: 3px; }
.map-type { display: flex; width: 110px; height: 36px; background: #fff; border: 2px solid #181a1b; border-radius: 4px; }
.map-type button { flex: 1; background: none; color: #222; font-size: 12px; line-height: 16px; white-space: nowrap; }
.map-type .on { flex: none; width: 43px; background: #3396ff; color: #fff; font-weight: 700; border-radius: 2px; }
.zoom { width: 32px; border-radius: 4px; overflow: hidden; background: rgba(255, 255, 255, .92); }
.zoom button { display: grid; place-items: center; width: 32px; height: 32px; background: #181a1b; }
.zoom-track { display: grid; place-items: center; height: 122px; }

/* footer */
footer { display: flex; align-items: center; gap: 8px; padding: 16px 30px; color: #9c9486; }
.logo-text { fill: #fff; font: 700 6px "Liberation Sans", sans-serif; }
```
